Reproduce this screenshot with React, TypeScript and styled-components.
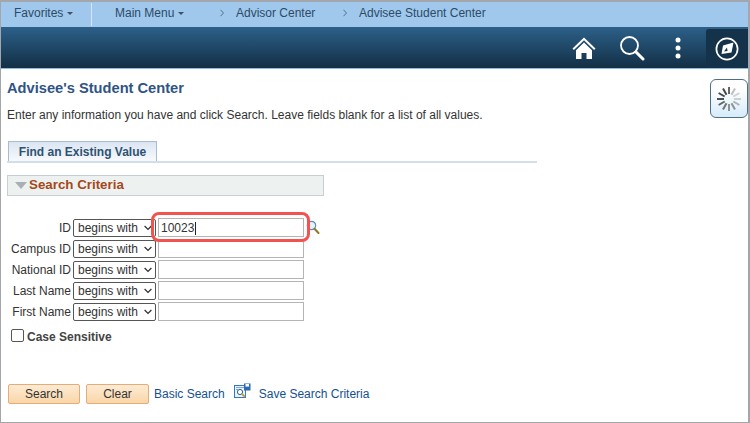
import React from 'react';
import styled, { createGlobalStyle } from 'styled-components';

const GlobalStyle = createGlobalStyle`
  html, body { margin: 0; padding: 0; background: #fff; }
  body { font-family: "Liberation Sans", Arial, sans-serif; font-size: 12px; }
`;

const Frame = styled.div`
  position: relative;
  width: 750px;
  height: 423px;
  box-sizing: border-box;
  border: 1px solid #a3a7ab;
  border-top-width: 2px;
  border-right-width: 2px;
  overflow: hidden;
  background: #fff;
`;

const NavBar = styled.nav`
  height: 25px;
  background: #9fc8ec;
  display: flex;
  align-items: flex-start;
  color: #2d4a66;
  box-sizing: border-box;
  padding-top: 1px;
`;

const FavoritesItem = styled.div`
  width: 91px;
  height: 23px;
  box-sizing: border-box;
  padding: 2px 0 6px 13px;
  display: flex;
  align-items: center;
  gap: 4px;
  border-right: 1px solid #d5e6f5;
`;

const MainMenuItem = styled.div`
  width: 121px;
  height: 23px;
  padding: 2px 0 6px 23px;
  box-sizing: border-box;
  display: flex;
  align-items: center;
  gap: 4px;
`;

const Crumb = styled.div<{ $width: number }>`
  width: ${p => p.$width}px;
  height: 23px;
  padding: 2px 0 6px 7px;
  box-sizing: border-box;
  display: flex;
  align-items: center;
  flex: none;
  gap: 12px;
`;

const Caret = styled.span`
  width: 0;
  height: 0;
  margin-top: 1px;
  border-left: 3.5px solid transparent;
  border-right: 3.5px solid transparent;
  border-top: 3.5px solid #3f5062;
`;

const Banner = styled.header`
  height: 41px;
  box-sizing: content-box;
  background: linear-gradient(#2c6089, #132f45);
  border-bottom: 1px solid #8cbde6;
  display: flex;
  align-items: stretch;
  justify-content: flex-end;
`;

const BannerIcon = styled.div<{ $width: number }>`
  width: ${p => p.$width}px;
  display: flex;
  align-items: center;
  justify-content: center;
`;

const CompassBox = styled.div`
  width: 42px;
  margin: 2px 0 0 6px;
  display: flex;
  align-items: center;
  justify-content: center;
  background: #14324a;
  border-radius: 3px 0 0 0;
`;

const Content = styled.main`
  padding: 11px 0 0 6px;
`;

const Title = styled.h1`
  margin: 0;
  font-size: 14.67px;
  line-height: 16px;
  font-weight: bold;
  color: #2f5486;
`;

const Intro = styled.p`
  margin: 12px 0 0;
  font-size: 12px;
  line-height: 14px;
  color: #333;
`;

const TabStrip = styled.div`
  margin-top: 19px;
  width: 530px;
  border-bottom: 2px solid #d3deeb;
  display: flex;
`;

const Tab = styled.div`
  margin-left: 1px;
  width: 149px;
  height: 20px;
  box-sizing: border-box;
  border: 1px solid #a8bbd0;
  border-bottom: none;
  background: linear-gradient(#dbe5f2, #f7fafd);
  color: #2f5272;
  font-weight: bold;
  font-size: 12px;
  line-height: 20px;
  text-align: center;
`;

const SectionHeader = styled.div`
  margin-top: 12px;
  width: 317px;
  height: 21px;
  box-sizing: border-box;
  border: 1px solid #c6d0d3;
  background: #edf2f1;
  display: flex;
  align-items: center;
  gap: 2px;
  padding: 0 0 2px 7px;
  color: #a5491a;
  font-weight: bold;
  font-size: 13.33px;
`;

const Triangle = styled.span`
  width: 0;
  height: 0;
  margin-top: 2px;
  border-left: 6px solid transparent;
  border-right: 6px solid transparent;
  border-top: 7px solid #a9b0b3;
`;

const Form = styled.div`
  margin-top: 22px;
  display: flex;
  flex-direction: column;
  gap: 2px;
`;

const Row = styled.div`
  display: grid;
  grid-template-columns: 65px 83px 146px 16px;
  column-gap: 1px;
  height: 19px;
  align-items: center;
  color: #333;
`;

const Label = styled.label`
  text-align: right;
  font-size: 12px;
  padding-right: 1px;
`;

const OperatorWrap = styled.div`
  position: relative;
  display: flex;
  width: 83px;
  height: 18px;
`;

const Operator = styled.select`
  appearance: none;
  width: 83px;
  height: 18px;
  box-sizing: border-box;
  margin: 0;
  padding: 0 0 0 4px;
  border: 1px solid #555;
  border-radius: 2px;
  background: #fff;
  color: #333;
  font-family: "Liberation Sans", Arial, sans-serif;
  font-size: 12px;
`;

const Chevron = styled.svg`
  position: absolute;
  right: 4px;
  top: 6px;
  pointer-events: none;
`;

const Field = styled.input`
  width: 146px;
  height: 19px;
  box-sizing: border-box;
  margin: 0 0 0 1px;
  padding: 0 2px;
  border: 1px solid #b4b4b4;
  border-radius: 0;
  outline: none;
  color: #333;
  font-family: "Liberation Sans", Arial, sans-serif;
  font-size: 12px;
`;

const LookupButton = styled.span`
  display: flex;
  margin-left: 2px;
`;

const TextCursor = styled.span`
  position: absolute;
  left: 194px;
  top: 220px;
  width: 1px;
  height: 13px;
  background: #222;
`;

const Highlight = styled.div`
  position: absolute;
  left: 150px;
  top: 210px;
  width: 159px;
  height: 30px;
  box-sizing: border-box;
  border: 3px solid #f2534f;
  border-radius: 8px;
  pointer-events: none;
`;

const CaseRow = styled.label`
  margin: 9px 0 0 4px;
  display: flex;
  align-items: center;
  gap: 3px;
  font-weight: bold;
  font-size: 12px;
  color: #444;
`;

const Box = styled.span`
  width: 11px;
  height: 11px;
  border: 1px solid #555;
  border-radius: 2px;
  background: #fff;
  margin-top: -3px;
`;

const Actions = styled.div`
  margin: 38px 0 0 1px;
  display: flex;
  align-items: center;
  height: 23px;
`;

const ActionButton = styled.button<{ $width: number; $gap: number }>`
  width: ${p => p.$width}px;
  height: 20px;
  margin: 1px ${p => p.$gap}px 0 0;
  padding: 0;
  box-sizing: border-box;
  border: 1px solid #e8ab75;
  border-radius: 2px;
  background: linear-gradient(#fdebd4, #f9d6a8);
  color: #333;
  font-family: "Liberation Sans", Arial, sans-serif;
  font-size: 12px;
`;

const ActionLink = styled.a`
  color: #14508f;
  font-size: 12px;
  margin-top: 1px;
`;

const SaveIcon = styled.span`
  display: flex;
  margin: -6px 8px 0 9px;
`;

const Spinner = styled.div`
  position: absolute;
  right: 0;
  top: 77px;
  width: 38px;
  height: 39px;
  box-sizing: border-box;
  border: 1px solid #506e82;
  border-radius: 6px;
  background: linear-gradient(#fff 25%, #d6ebfa);
  display: flex;
  align-items: center;
  justify-content: center;
`;

const HomeIcon = () => (
  <svg width="26" height="24" viewBox="0 0 26 24">
    <path d="M13 1.5 1.5 12.5l1.4 1.4L13 4.3l10.1 9.6 1.4-1.4Z" fill="#fff" />
    <path d="M5 14.2 13 6.5l8 7.7V23h-5.5v-6h-5v6H5Z" fill="#fff" />
  </svg>
);

const SearchIcon = () => (
  <svg width="26" height="26" viewBox="0 0 26 26">
    <circle cx="10.5" cy="10.5" r="8.5" fill="none" stroke="#fff" strokeWidth="1.8" />
    <path d="m17 17 7 7" stroke="#fff" strokeWidth="3" strokeLinecap="round" />
  </svg>
);

const DotsIcon = () => (
  <svg width="6" height="22" viewBox="0 0 6 22">
    <circle cx="3" cy="3" r="2.5" fill="#fff" />
    <circle cx="3" cy="11" r="2.5" fill="#fff" />
    <circle cx="3" cy="19" r="2.5" fill="#fff" />
  </svg>
);

const CompassIcon = () => (
  <svg width="24" height="24" viewBox="0 0 24 24">
    <circle cx="12" cy="12" r="10.6" fill="none" stroke="#fff" strokeWidth="1.7" />
    <path d="M18.5 5.5 16.5 15.5 6.5 17 8 8.5Z" fill="#fff" />
    <path d="m9 14.5 3-4 .5 3.6Z" fill="#14324a" />
  </svg>
);

const CrumbArrow = () => (
  <svg width="4" height="8" viewBox="0 0 4 8">
    <path d="m.5.8 3 3.2-3 3.2" fill="none" stroke="#3f5a75" strokeWidth=".8" />
  </svg>
);

const LookupIcon = () => (
  <svg width="14" height="15" viewBox="0 0 14 15">
    <circle cx="5.5" cy="5.5" r="4.2" fill="#e6f1fa" stroke="#5f8fb8" strokeWidth="1.2" />
    <path d="m8.5 8.8 4 4.2" stroke="#8a7a2a" strokeWidth="2" strokeLinecap="round" />
  </svg>
);

const SaveSearchIcon = () => (
  <svg width="17" height="16" viewBox="0 0 17 16">
    <rect x="0.5" y="2.5" width="11" height="12" fill="#eaf3fb" stroke="#3478c0" />
    <rect x="10" y="0.5" width="6.5" height="7" fill="#2d6cae" />
    <rect x="11.5" y="1" width="3.5" height="2.6" fill="#fff" />
    <path d="M2 4.5h8M2 6.5h2" stroke="#7fa8d2" />
    <circle cx="6" cy="9" r="2.6" fill="#fff" stroke="#2f5f8a" />
    <path d="m8 11 3 3" stroke="#c7a12c" strokeWidth="1.8" />
  </svg>
);

const SPOKES = [0.75, 0.3, 0.2, 0.2, 0.35, 0.5, 0.5, 0.65, 0.75, 0.85, 0.9, 0.9];

const SpinnerIcon = () => (
  <svg width="24" height="24" viewBox="0 0 24 24">
    {SPOKES.map((opacity, i) => (
      <rect
        key={i}
        x="11"
        y="0"
        width="2"
        height="7"
        fill="#333"
        opacity={opacity}
        transform={`rotate(${i * 30} 12 12)`}
      />
    ))}
  </svg>
);

const FIELDS: [string, string][] = [
  ['ID', '10023'],
  ['Campus ID', ''],
  ['National ID', ''],
  ['Last Name', ''],
  ['First Name', ''],
];

export default function App() {
  return (
    <Frame>
      <GlobalStyle />
      <NavBar>
        <FavoritesItem>Favorites <Caret /></FavoritesItem>
        <MainMenuItem>Main Menu <Caret /></MainMenuItem>
        <Crumb $width={123}>
          <CrumbArrow />Advisor Center
        </Crumb>
        <Crumb $width={170}>
          <CrumbArrow />Advisee Student Center
        </Crumb>
      </NavBar>
      <Banner>
        <BannerIcon $width={48}><HomeIcon /></BannerIcon>
        <BannerIcon $width={48}><SearchIcon /></BannerIcon>
        <BannerIcon $width={44}><DotsIcon /></BannerIcon>
        <CompassBox><CompassIcon /></CompassBox>
      </Banner>
      <Content>
        <Title>Advisee's Student Center</Title>
        <Intro>Enter any information you have and click Search. Leave fields blank for a list of all values.</Intro>
        <TabStrip>
          <Tab>Find an Existing Value</Tab>
        </TabStrip>
        <SectionHeader>
          <Triangle />
          Search Criteria
        </SectionHeader>
        <Form>
          {FIELDS.map(([label, value], i) => (
            <Row key={label}>
              <Label>{label}</Label>
              <OperatorWrap>
                <Operator defaultValue="begins with">
                  <option>begins with</option>
                  <option>contains</option>
                </Operator>
                <Chevron width="8" height="6" viewBox="0 0 8 6">
                  <path d="m.6 1 3.4 3.4L7.4 1" fill="none" stroke="#333" strokeWidth="1.3" />
                </Chevron>
              </OperatorWrap>
              <Field defaultValue={value} readOnly />
              {i === 0 && <LookupButton><LookupIcon /></LookupButton>}
            </Row>
          ))}
        </Form>
        <CaseRow>
          <Box />
          Case Sensitive
        </CaseRow>
        <Actions>
          <ActionButton $width={72} $gap={6}>Search</ActionButton>
          <ActionButton $width={63} $gap={5}>Clear</ActionButton>
          <ActionLink>Basic Search</ActionLink>
          <SaveIcon><SaveSearchIcon /></SaveIcon>
          <ActionLink>Save Search Criteria</ActionLink>
        </Actions>
      </Content>
      <TextCursor />
      <Highlight />
      <Spinner><SpinnerIcon /></Spinner>
    </Frame>
  );
}
